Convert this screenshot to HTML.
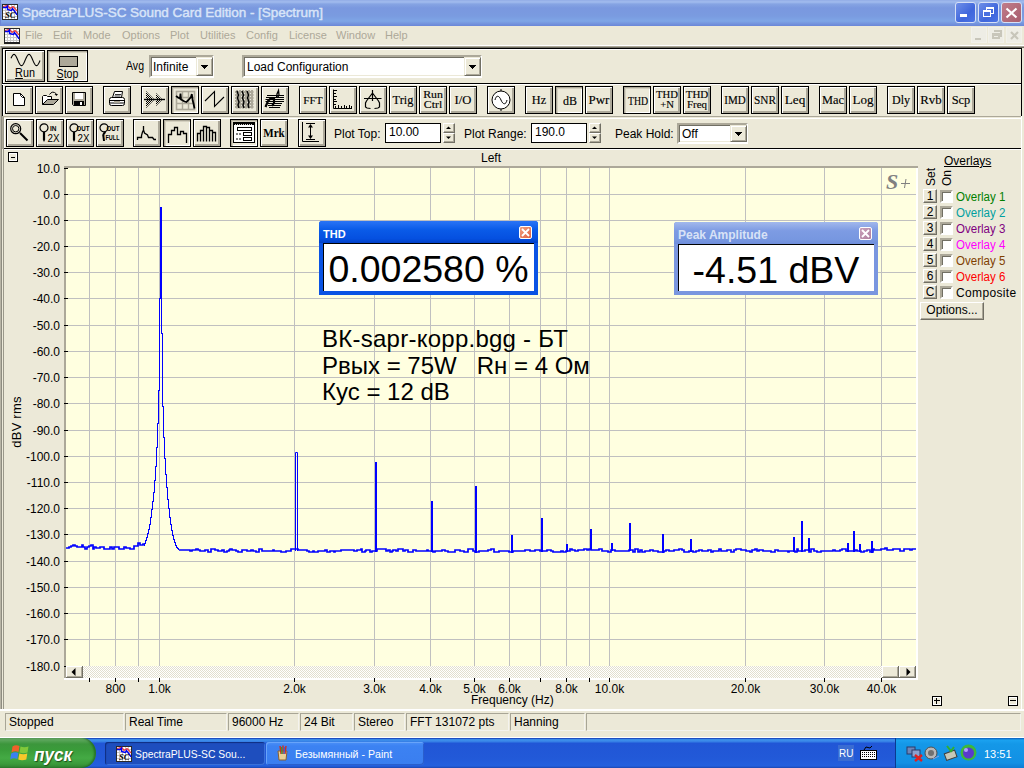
<!DOCTYPE html><html><head><meta charset="utf-8"><style>html,body{margin:0;padding:0;width:1024px;height:768px;overflow:hidden;background:#ECE9D8;}body{position:relative;font-family:"Liberation Sans",sans-serif;}body>div,body>svg{position:absolute;}.t{white-space:pre;line-height:14px;}</style></head><body><div style="left:0;top:0;width:1024px;height:26px;background:linear-gradient(to bottom,#92ACE6 0px,#A2BCEE 2px,#86A4E3 4px,#7A98DF 8px,#7A9BE0 16px,#7EA5E6 21px,#7392DC 24px,#6A86D8 26px);"></div>
<div style="left:0px;top:0px;width:1px;height:26px;background:#6C86D6"></div>
<svg style="position:absolute;left:2px;top:4px;" width="16" height="16" viewBox="0 0 16 16"><rect x="0.5" y="0.5" width="15" height="15" fill="#fff" stroke="#2A2A2A"/><line x1="3.5" y1="1" x2="3.5" y2="15" stroke="#C8C8C8"/><line x1="1" y1="3.5" x2="15" y2="3.5" stroke="#C8C8C8"/><line x1="6.5" y1="1" x2="6.5" y2="15" stroke="#C8C8C8"/><line x1="1" y1="6.5" x2="15" y2="6.5" stroke="#C8C8C8"/><line x1="9.5" y1="1" x2="9.5" y2="15" stroke="#C8C8C8"/><line x1="1" y1="9.5" x2="15" y2="9.5" stroke="#C8C8C8"/><line x1="12.5" y1="1" x2="12.5" y2="15" stroke="#C8C8C8"/><line x1="1" y1="12.5" x2="15" y2="12.5" stroke="#C8C8C8"/><polyline points="1,2.5 5.5,1.5 7,3 8,4.5 11,2.5 13,4.5 15,7" fill="none" stroke="#F03838" stroke-width="1.2"/><polyline points="1,3.5 4,3.5 5.5,2 5.5,5.5 7.5,6 9.5,6.5 10.5,4.5 12,6.5 13.5,8.5 15,11" fill="none" stroke="#0000F0" stroke-width="1.4"/><text x="3" y="14" font-family="Liberation Serif" font-style="italic" font-weight="bold" font-size="8" textLength="10.5" lengthAdjust="spacingAndGlyphs" fill="#000">SC</text></svg>
<div class="t" style="left:22px;top:6px;font-size:13.5px;color:#D8E4F8;-webkit-text-stroke:0.45px #D8E4F8;letter-spacing:-0.05px;">SpectraPLUS-SC Sound Card Edition - [Spectrum]</div>
<div style="left:955px;top:2px;width:19px;height:19px;border:1px solid #D6E0F6;border-radius:3px;background:linear-gradient(135deg,#6F8FE8,#3F66DC 60%,#4C74E4);"></div>
<div style="left:960px;top:14px;width:7px;height:3px;background:#fff"></div>
<div style="left:978px;top:2px;width:19px;height:19px;border:1px solid #D6E0F6;border-radius:3px;background:linear-gradient(135deg,#6F8FE8,#3F66DC 60%,#4C74E4);"></div>
<div style="left:986px;top:7px;width:8px;height:7px;border:1px solid #fff;border-top-width:2px;box-sizing:border-box;"></div>
<div style="left:983px;top:10px;width:8px;height:7px;border:1px solid #fff;border-top-width:2px;box-sizing:border-box;background:#4A70E0"></div>
<div style="left:1001px;top:2px;width:19px;height:19px;border:1px solid #D6E0F6;border-radius:3px;background:linear-gradient(135deg,#C07C8A,#A85E6E);"></div>
<svg style="position:absolute;left:1005px;top:7px;" width="13" height="12" viewBox="0 0 13 12"><path d="M1.5 1.5 L11.5 10.5 M11.5 1.5 L1.5 10.5" stroke="#fff" stroke-width="2.2"/></svg>
<div style="left:0px;top:26px;width:1024px;height:20px;background:#ECE9D8"></div>
<svg style="position:absolute;left:4px;top:28px;" width="16" height="16" viewBox="0 0 16 16"><rect x="0.5" y="0.5" width="15" height="15" fill="#fff" stroke="#2A2A2A"/><line x1="3.5" y1="1" x2="3.5" y2="15" stroke="#C8C8C8"/><line x1="1" y1="3.5" x2="15" y2="3.5" stroke="#C8C8C8"/><line x1="6.5" y1="1" x2="6.5" y2="15" stroke="#C8C8C8"/><line x1="1" y1="6.5" x2="15" y2="6.5" stroke="#C8C8C8"/><line x1="9.5" y1="1" x2="9.5" y2="15" stroke="#C8C8C8"/><line x1="1" y1="9.5" x2="15" y2="9.5" stroke="#C8C8C8"/><line x1="12.5" y1="1" x2="12.5" y2="15" stroke="#C8C8C8"/><line x1="1" y1="12.5" x2="15" y2="12.5" stroke="#C8C8C8"/><polyline points="1,2.5 5.5,1.5 7,3 8,4.5 11,2.5 13,4.5 15,7" fill="none" stroke="#F03838" stroke-width="1.2"/><polyline points="1,3.5 4,3.5 5.5,2 5.5,5.5 7.5,6 9.5,6.5 10.5,4.5 12,6.5 13.5,8.5 15,11" fill="none" stroke="#0000F0" stroke-width="1.4"/><rect x="0" y="14" width="16" height="2" fill="#222"/></svg>
<div class="t" style="left:25px;top:28px;font-size:11px;color:#ACA899;">File</div>
<div class="t" style="left:53px;top:28px;font-size:11px;color:#ACA899;">Edit</div>
<div class="t" style="left:83px;top:28px;font-size:11px;color:#ACA899;">Mode</div>
<div class="t" style="left:122px;top:28px;font-size:11px;color:#ACA899;">Options</div>
<div class="t" style="left:170px;top:28px;font-size:11px;color:#ACA899;">Plot</div>
<div class="t" style="left:200px;top:28px;font-size:11px;color:#ACA899;">Utilities</div>
<div class="t" style="left:246px;top:28px;font-size:11px;color:#ACA899;">Config</div>
<div class="t" style="left:289px;top:28px;font-size:11px;color:#ACA899;">License</div>
<div class="t" style="left:336px;top:28px;font-size:11px;color:#ACA899;">Window</div>
<div class="t" style="left:385px;top:28px;font-size:11px;color:#ACA899;">Help</div>
<div style="left:971px;top:27px;width:16px;height:16px;background:#EEEDE5;border:1px solid #F2F1EA;box-sizing:border-box"></div>
<div style="left:988px;top:27px;width:16px;height:16px;background:#EEEDE5;border:1px solid #F2F1EA;box-sizing:border-box"></div>
<div style="left:1006px;top:27px;width:16px;height:16px;background:#EEEDE5;border:1px solid #F2F1EA;box-sizing:border-box"></div>
<div style="left:975px;top:38px;width:6px;height:2px;background:#C8C6BA"></div>
<div style="left:994px;top:30px;width:8px;height:7px;border-top:2px solid #C8C6BA;border-right:2px solid #C8C6BA;box-sizing:border-box"></div>
<div style="left:992px;top:33px;width:8px;height:6px;border:2px solid #C8C6BA;border-top-width:3px;box-sizing:border-box;background:#EEEDE5"></div>
<svg style="position:absolute;left:1010px;top:31px;" width="9" height="9" viewBox="0 0 9 9"><path d="M1 1 L8 8 M8 1 L1 8" stroke="#C8C6BA" stroke-width="2.2"/></svg>
<div style="left:0px;top:45px;width:1024px;height:665px;background:#ECE9D8"></div>
<div style="left:0px;top:46px;width:2px;height:664px;background:#ACA899"></div>
<div style="left:0px;top:45px;width:1024px;height:1px;background:#fff"></div>
<div style="left:0px;top:46px;width:1024px;height:1px;background:#ACA899"></div>
<div style="left:0px;top:47px;width:1024px;height:1px;background:#716F64"></div>
<div style="left:2px;top:48px;width:1020px;height:1px;background:#000"></div>
<div style="left:2px;top:48px;width:1px;height:68px;background:#000"></div>
<div style="left:1021px;top:48px;width:1px;height:68px;background:#000"></div>
<div style="left:3px;top:49px;width:1018px;height:1px;background:#fff"></div>
<div style="left:3px;top:49px;width:1px;height:66px;background:#fff"></div>
<div style="left:2px;top:83px;width:1020px;height:1px;background:#000"></div>
<div style="left:2px;top:84px;width:1019px;height:1px;background:#fff"></div>
<div style="left:2px;top:116px;width:1020px;height:1px;background:#ACA899"></div>
<div style="left:2px;top:116px;width:1px;height:33px;background:#ACA899"></div>
<div style="left:3px;top:117px;width:1px;height:32px;background:#7B7A6E"></div>
<div style="left:4px;top:118px;width:1017px;height:1px;background:#fff"></div>
<div style="left:4px;top:118px;width:1px;height:31px;background:#fff"></div>
<div style="left:1021px;top:116px;width:1px;height:33px;background:#fff"></div>
<div style="left:4px;top:148px;width:1017px;height:1px;background:#000"></div>
<div style="left:4px;top:149px;width:1017px;height:1px;background:#fff"></div>
<div style="left:5px;top:50px;width:38px;height:30px;background:#ECE9D8;border:1px solid #000;box-shadow:inset 1px 1px 0 #fff,inset -2px -2px 0 #ACA899;"></div>
<svg style="position:absolute;left:5px;top:50px;" width="40" height="32" viewBox="0 0 40 32"><polyline points="6.0,8.27 6.5,7.20 7.0,6.25 7.5,5.47 8.0,4.88 8.5,4.52 9.0,4.40 9.5,4.52 10.0,4.88 10.5,5.47 11.0,6.25 11.5,7.20 12.0,8.27 12.5,9.41 13.0,10.59 13.5,11.73 14.0,12.80 14.5,13.75 15.0,14.53 15.5,15.12 16.0,15.48 16.5,15.60 17.0,15.48 17.5,15.12 18.0,14.53 18.5,13.75 19.0,12.80 19.5,11.73 20.0,10.59 20.5,9.41 21.0,8.27 21.5,7.20 22.0,6.25 22.5,5.47 23.0,4.88 23.5,4.52 24.0,4.40 24.5,4.52 25.0,4.88 25.5,5.47 26.0,6.25 26.5,7.20 27.0,8.27 27.5,9.41 28.0,10.59 28.5,11.73 29.0,12.80 29.5,13.75 30.0,14.53 30.5,15.12 31.0,15.48 31.5,15.60 32.0,15.48 32.5,15.12 33.0,14.53 33.5,13.75 34.0,12.80 34.5,11.73 35.0,10.59" fill="none" stroke="#000" stroke-width="1.1"/></svg>
<div class="t" style="left:5px;top:66px;width:40px;text-align:center;font-size:12px;color:#000;transform:scaleX(0.9);"><u>R</u>un</div>
<div style="left:47px;top:50px;width:39px;height:30px;background:#ECE9D8;border:1px solid #000;box-shadow:inset 1px 1px 0 #ACA899,inset 2px 2px 0 #D4D0C0,inset -1px -1px 0 #fff;"></div>
<div style="left:59px;top:56px;width:19px;height:11px;background:#ACA899;border:1px solid #000;box-sizing:border-box;"></div>
<div class="t" style="left:47px;top:67px;width:41px;text-align:center;font-size:12px;color:#000;transform:scaleX(0.88);"><u>S</u>top</div>
<div class="t" style="left:126px;top:59px;font-size:12px;color:#000;transform:scaleX(0.88);transform-origin:left;">Avg</div>
<div style="left:149px;top:55px;width:61px;height:19px;background:#fff;border:2px solid;border-color:#ACA899 #fff #fff #ACA899;box-shadow:inset 1px 1px 0 #716F64,inset -1px -1px 0 #ECE9D8;"></div>
<div class="t" style="left:153px;top:60px;font-size:12px;color:#000;">Infinite</div>
<div style="left:196px;top:57px;width:15px;height:17px;background:#ECE9D8;border:1px solid;border-color:#ECE9D8 #716F64 #716F64 #ECE9D8;box-shadow:inset 1px 1px 0 #fff,inset -1px -1px 0 #ACA899;"></div>
<svg style="position:absolute;left:201px;top:65px;shape-rendering:crispEdges;" width="7" height="4" viewBox="0 0 7 4"><path d="M0 0 H7 L3.5 4 Z" fill="#000"/></svg>
<div style="left:242px;top:55px;width:236px;height:19px;background:#fff;border:2px solid;border-color:#ACA899 #fff #fff #ACA899;box-shadow:inset 1px 1px 0 #716F64,inset -1px -1px 0 #ECE9D8;"></div>
<div class="t" style="left:247px;top:60px;font-size:12px;color:#000;">Load Configuration</div>
<div style="left:464px;top:57px;width:15px;height:17px;background:#ECE9D8;border:1px solid;border-color:#ECE9D8 #716F64 #716F64 #ECE9D8;box-shadow:inset 1px 1px 0 #fff,inset -1px -1px 0 #ACA899;"></div>
<svg style="position:absolute;left:469px;top:65px;shape-rendering:crispEdges;" width="7" height="4" viewBox="0 0 7 4"><path d="M0 0 H7 L3.5 4 Z" fill="#000"/></svg>
<div style="left:5px;top:86px;width:26px;height:26px;background:#ECE9D8;border:1px solid #000;box-shadow:inset 1px 1px 0 #fff,inset -2px -2px 0 #ACA899;"></div>
<svg style="position:absolute;left:5px;top:86px;" width="28" height="28" viewBox="0 0 28 28"><path d="M8.5 7.5 H15.5 L19.5 11.5 V19.5 H8.5 Z" fill="#fff" stroke="#000"/><path d="M15.5 7.5 V9.5 L17.5 11.5 H19.5" fill="none" stroke="#000"/></svg>
<div style="left:35px;top:86px;width:26px;height:26px;background:#ECE9D8;border:1px solid #000;box-shadow:inset 1px 1px 0 #fff,inset -2px -2px 0 #ACA899;"></div>
<svg style="position:absolute;left:35px;top:86px;" width="28" height="28" viewBox="0 0 28 28"><path d="M7.5 18.5 V10.5 L8.5 9.5 H11.5 L12.5 10.5 H16.5 V13.5" fill="#fff" stroke="#000"/><path d="M7.5 18.5 L12.5 13.5 H23.5 L18.5 18.5 Z" fill="#ACA899" stroke="#000"/><path d="M14.5 8.5 Q17.5 4 21.5 8" fill="none" stroke="#000"/><path d="M19.5 8 H23 L21.5 10 Z" fill="#000"/></svg>
<div style="left:65px;top:86px;width:26px;height:26px;background:#ECE9D8;border:1px solid #000;box-shadow:inset 1px 1px 0 #fff,inset -2px -2px 0 #ACA899;"></div>
<svg style="position:absolute;left:65px;top:86px;" width="28" height="28" viewBox="0 0 28 28"><path d="M7.5 6.5 H20.5 V19.5 H8.5 L7.5 18.5 Z" fill="#ACA899" stroke="#000"/><rect x="10" y="7" width="8" height="6" fill="#fff"/><rect x="9" y="15" width="10" height="4" fill="#000"/><rect x="15" y="16" width="2" height="3" fill="#fff"/></svg>
<div style="left:103px;top:86px;width:26px;height:26px;background:#ECE9D8;border:1px solid #000;box-shadow:inset 1px 1px 0 #fff,inset -2px -2px 0 #ACA899;"></div>
<svg style="position:absolute;left:103px;top:86px;" width="28" height="28" viewBox="0 0 28 28"><path d="M9.5 11.5 L11.5 5.5 H19.5 L18.5 11.5" fill="#fff" stroke="#000"/><path d="M12 8.5 H18 M11.5 10 H17.5" stroke="#000" stroke-width="0.8"/><rect x="6.5" y="11.5" width="15" height="8" rx="2" fill="#fff" stroke="#000"/><path d="M7 14.5 H21 M7 17 H21" stroke="#000"/><rect x="11" y="15" width="6" height="2" fill="#ACA899"/></svg>
<div style="left:141px;top:86px;width:26px;height:26px;background:#ECE9D8;border:1px solid #000;box-shadow:inset 1px 1px 0 #fff,inset -2px -2px 0 #ACA899;"></div>
<svg style="position:absolute;left:141px;top:86px;" width="28" height="28" viewBox="0 0 28 28"><defs><pattern id="dth1" width="2" height="2" patternUnits="userSpaceOnUse"><rect width="1" height="1" fill="#000"/><rect x="1" y="1" width="1" height="1" fill="#000"/></pattern></defs><path d="M5 5 L13.5 13.5 L5 22 Z M15 7 L21.5 13.5 L15 20 Z" fill="url(#dth1)"/><path d="M3 13.5 H24" stroke="#000" stroke-width="1.4"/></svg>
<div style="left:171px;top:86px;width:26px;height:26px;background:#ECE9D8;border:1px solid #000;box-shadow:inset 1px 1px 0 #ACA899,inset 2px 2px 0 #D4D0C0,inset -1px -1px 0 #fff;"></div>
<svg style="position:absolute;left:171px;top:86px;" width="28" height="28" viewBox="0 0 28 28"><rect x="5.5" y="5.5" width="18" height="18" fill="none" stroke="#ACA899" stroke-width="1.6"/><path d="M11.5 5 V24 M17.5 5 V24 M5 11.5 H24 M5 17.5 H24" stroke="#ACA899" stroke-width="1.4"/><path d="M5 10 L7 11.5 L9 12.5 L9.5 7.5 L10 13.5 L13.5 15.5 L15.5 16 L17.5 14 L20 11 L20.8 8 L21.7 14.5 L22.6 18 L23.5 22.5" fill="none" stroke="#000" stroke-width="1.8"/></svg>
<div style="left:201px;top:86px;width:26px;height:26px;background:#ECE9D8;border:1px solid #000;box-shadow:inset 1px 1px 0 #fff,inset -2px -2px 0 #ACA899;"></div>
<svg style="position:absolute;left:201px;top:86px;" width="28" height="28" viewBox="0 0 28 28"><path d="M4 15 L13.5 5.5 V20.5 L23 11" fill="none" stroke="#000" stroke-width="1.1"/></svg>
<div style="left:231px;top:86px;width:26px;height:26px;background:#ECE9D8;border:1px solid #000;box-shadow:inset 1px 1px 0 #fff,inset -2px -2px 0 #ACA899;"></div>
<svg style="position:absolute;left:231px;top:86px;" width="28" height="28" viewBox="0 0 28 28"><defs><pattern id="dth2" width="3" height="3" patternUnits="userSpaceOnUse"><rect width="3" height="3" fill="#ACA899"/><rect x="1" y="1" width="1" height="1" fill="#E8E6DC"/></pattern></defs><rect x="4" y="4" width="18.5" height="18.5" fill="url(#dth2)"/><path d="M6 5 L7.5 9 L6.5 12 L8 16 L7 19 L8 22" fill="none" stroke="#000" stroke-width="1.4"/><path d="M11 5 L12.5 9 L11.5 12 L13 16 L12 19 L13 22" fill="none" stroke="#000" stroke-width="1.4"/><path d="M16 5 L17.5 9 L16.5 12 L18 16 L17 19 L18 22" fill="none" stroke="#000" stroke-width="1.4"/></svg>
<div style="left:261px;top:86px;width:26px;height:26px;background:#ECE9D8;border:1px solid #000;box-shadow:inset 1px 1px 0 #fff,inset -2px -2px 0 #ACA899;"></div>
<svg style="position:absolute;left:261px;top:86px;" width="28" height="28" viewBox="0 0 28 28"><path d="M6 9.5 H23 M5 11.5 H23 M4.5 13.5 H23 M4.5 15.5 H23 M7 17.5 H21 M7 19.5 H20 M8 21.5 H19" stroke="#000" stroke-width="1"/><path d="M4.5 21 L7 15 L9 13 L13 12.5 L13 17 L11 20" fill="none" stroke="#000" stroke-width="2.2"/><path d="M15.5 12 L16 8 L17.5 4.5 L18 9 L16.5 12" fill="none" stroke="#000" stroke-width="1.3"/></svg>
<div style="left:299px;top:86px;width:26px;height:26px;background:#ECE9D8;border:1px solid #000;box-shadow:inset 1px 1px 0 #fff,inset -2px -2px 0 #ACA899;"></div>
<div class="t" style="left:299px;top:93px;width:28px;text-align:center;font-family:'Liberation Serif',serif;-webkit-text-stroke:0.15px #000;font-size:11px;color:#000;transform:scaleX(1.018);">FFT</div>
<div style="left:329px;top:86px;width:26px;height:26px;background:#ECE9D8;border:1px solid #000;box-shadow:inset 1px 1px 0 #fff,inset -2px -2px 0 #ACA899;"></div>
<svg style="position:absolute;left:329px;top:86px;" width="28" height="28" viewBox="0 0 28 28"><path d="M4.5 3.5 V22.5 H23 M5 4.5 H8M5 7.5 H7M5 10.5 H8M5 13.5 H7M5 15.5 H8M5 18.5 H7 M6.5 22 V20M9.5 22 V19M12.5 22 V20M15.5 22 V19M17.5 22 V20M20.5 22 V19M22.5 22 V20" fill="none" stroke="#000" stroke-width="1"/></svg>
<div style="left:359px;top:86px;width:26px;height:26px;background:#ECE9D8;border:1px solid #000;box-shadow:inset 1px 1px 0 #fff,inset -2px -2px 0 #ACA899;"></div>
<svg style="position:absolute;left:359px;top:86px;" width="28" height="28" viewBox="0 0 28 28"><path d="M13.5 4 V15 M5 12.5 H22.5 M13.5 7 L7.5 15 L6.5 17 V21 L8 22 L11.5 22.5 M13.5 7 L19.5 15 L20.5 17 V21 L19 22 L15.5 22.5" fill="none" stroke="#000" stroke-width="1.2"/></svg>
<div style="left:389px;top:86px;width:26px;height:26px;background:#ECE9D8;border:1px solid #000;box-shadow:inset 1px 1px 0 #fff,inset -2px -2px 0 #ACA899;"></div>
<div class="t" style="left:389px;top:93px;width:28px;text-align:center;font-family:'Liberation Serif',serif;-webkit-text-stroke:0.15px #000;font-size:13px;color:#000;transform:scaleX(0.948);">Trig</div>
<div style="left:419px;top:86px;width:26px;height:26px;background:#ECE9D8;border:1px solid #000;box-shadow:inset 1px 1px 0 #fff,inset -2px -2px 0 #ACA899;"></div>
<div class="t" style="left:419px;top:89px;width:28px;text-align:center;font-family:'Liberation Serif',serif;-webkit-text-stroke:0.15px #000;font-size:11px;line-height:10px;color:#000;transform:scaleX(1.075);">Run<br>Ctrl</div>
<div style="left:449px;top:86px;width:26px;height:26px;background:#ECE9D8;border:1px solid #000;box-shadow:inset 1px 1px 0 #fff,inset -2px -2px 0 #ACA899;"></div>
<div class="t" style="left:449px;top:93px;width:28px;text-align:center;font-family:'Liberation Serif',serif;-webkit-text-stroke:0.15px #000;font-size:13px;color:#000;transform:scaleX(0.969);">I/O</div>
<div style="left:487px;top:86px;width:26px;height:26px;background:#ECE9D8;border:1px solid #000;box-shadow:inset 1px 1px 0 #fff,inset -2px -2px 0 #ACA899;"></div>
<svg style="position:absolute;left:487px;top:86px;" width="28" height="28" viewBox="0 0 28 28"><circle cx="14" cy="14" r="9" fill="#fff" stroke="#000"/><path d="M8 14 C9 9,12 9,14 14 S19 19,20 14" fill="none" stroke="#000"/><path d="M14 3 V5 M14 23 V25" stroke="#000"/></svg>
<div style="left:525px;top:86px;width:26px;height:26px;background:#ECE9D8;border:1px solid #000;box-shadow:inset 1px 1px 0 #fff,inset -2px -2px 0 #ACA899;"></div>
<div class="t" style="left:525px;top:93px;width:28px;text-align:center;font-family:'Liberation Serif',serif;-webkit-text-stroke:0.15px #000;font-size:13px;color:#000;transform:scaleX(0.943);">Hz</div>
<div style="left:555px;top:86px;width:26px;height:26px;background:#ECE9D8;border:1px solid #000;box-shadow:inset 1px 1px 0 #ACA899,inset 2px 2px 0 #D4D0C0,inset -1px -1px 0 #fff;"></div>
<div class="t" style="left:556px;top:94px;width:28px;text-align:center;font-family:'Liberation Serif',serif;-webkit-text-stroke:0.15px #000;font-size:13px;color:#000;transform:scaleX(0.922);">dB</div>
<div style="left:585px;top:86px;width:26px;height:26px;background:#ECE9D8;border:1px solid #000;box-shadow:inset 1px 1px 0 #fff,inset -2px -2px 0 #ACA899;"></div>
<div class="t" style="left:585px;top:93px;width:28px;text-align:center;font-family:'Liberation Serif',serif;-webkit-text-stroke:0.15px #000;font-size:13px;color:#000;transform:scaleX(0.998);">Pwr</div>
<div style="left:623px;top:86px;width:26px;height:26px;background:#ECE9D8;border:1px solid #000;box-shadow:inset 1px 1px 0 #ACA899,inset 2px 2px 0 #D4D0C0,inset -1px -1px 0 #fff;"></div>
<div class="t" style="left:624px;top:94px;width:28px;text-align:center;font-family:'Liberation Serif',serif;-webkit-text-stroke:0.15px #000;font-size:12px;color:#000;transform:scaleX(0.819);">THD</div>
<div style="left:653px;top:86px;width:26px;height:26px;background:#ECE9D8;border:1px solid #000;box-shadow:inset 1px 1px 0 #fff,inset -2px -2px 0 #ACA899;"></div>
<div class="t" style="left:653px;top:89px;width:28px;text-align:center;font-family:'Liberation Serif',serif;-webkit-text-stroke:0.15px #000;font-size:11px;line-height:10px;color:#000;transform:scaleX(0.968);">THD<br>+N</div>
<div style="left:683px;top:86px;width:26px;height:26px;background:#ECE9D8;border:1px solid #000;box-shadow:inset 1px 1px 0 #fff,inset -2px -2px 0 #ACA899;"></div>
<div class="t" style="left:683px;top:89px;width:28px;text-align:center;font-family:'Liberation Serif',serif;-webkit-text-stroke:0.15px #000;font-size:11px;line-height:10px;color:#000;transform:scaleX(0.997);">THD<br>Freq</div>
<div style="left:721px;top:86px;width:26px;height:26px;background:#ECE9D8;border:1px solid #000;box-shadow:inset 1px 1px 0 #fff,inset -2px -2px 0 #ACA899;"></div>
<div class="t" style="left:721px;top:93px;width:28px;text-align:center;font-family:'Liberation Serif',serif;-webkit-text-stroke:0.15px #000;font-size:12px;color:#000;transform:scaleX(0.917);">IMD</div>
<div style="left:751px;top:86px;width:26px;height:26px;background:#ECE9D8;border:1px solid #000;box-shadow:inset 1px 1px 0 #fff,inset -2px -2px 0 #ACA899;"></div>
<div class="t" style="left:751px;top:93px;width:28px;text-align:center;font-family:'Liberation Serif',serif;-webkit-text-stroke:0.15px #000;font-size:12px;color:#000;transform:scaleX(0.938);">SNR</div>
<div style="left:781px;top:86px;width:26px;height:26px;background:#ECE9D8;border:1px solid #000;box-shadow:inset 1px 1px 0 #fff,inset -2px -2px 0 #ACA899;"></div>
<div class="t" style="left:781px;top:93px;width:28px;text-align:center;font-family:'Liberation Serif',serif;-webkit-text-stroke:0.15px #000;font-size:13px;color:#000;transform:scaleX(1.019);">Leq</div>
<div style="left:819px;top:86px;width:26px;height:26px;background:#ECE9D8;border:1px solid #000;box-shadow:inset 1px 1px 0 #fff,inset -2px -2px 0 #ACA899;"></div>
<div class="t" style="left:819px;top:93px;width:28px;text-align:center;font-family:'Liberation Serif',serif;-webkit-text-stroke:0.15px #000;font-size:13px;color:#000;transform:scaleX(0.948);">Mac</div>
<div style="left:849px;top:86px;width:26px;height:26px;background:#ECE9D8;border:1px solid #000;box-shadow:inset 1px 1px 0 #fff,inset -2px -2px 0 #ACA899;"></div>
<div class="t" style="left:849px;top:93px;width:28px;text-align:center;font-family:'Liberation Serif',serif;-webkit-text-stroke:0.15px #000;font-size:13px;color:#000;transform:scaleX(1.007);">Log</div>
<div style="left:887px;top:86px;width:26px;height:26px;background:#ECE9D8;border:1px solid #000;box-shadow:inset 1px 1px 0 #fff,inset -2px -2px 0 #ACA899;"></div>
<div class="t" style="left:887px;top:93px;width:28px;text-align:center;font-family:'Liberation Serif',serif;-webkit-text-stroke:0.15px #000;font-size:13px;color:#000;transform:scaleX(0.923);">Dly</div>
<div style="left:917px;top:86px;width:26px;height:26px;background:#ECE9D8;border:1px solid #000;box-shadow:inset 1px 1px 0 #fff,inset -2px -2px 0 #ACA899;"></div>
<div class="t" style="left:917px;top:93px;width:28px;text-align:center;font-family:'Liberation Serif',serif;-webkit-text-stroke:0.15px #000;font-size:13px;color:#000;transform:scaleX(0.987);">Rvb</div>
<div style="left:947px;top:86px;width:26px;height:26px;background:#ECE9D8;border:1px solid #000;box-shadow:inset 1px 1px 0 #fff,inset -2px -2px 0 #ACA899;"></div>
<div class="t" style="left:947px;top:93px;width:28px;text-align:center;font-family:'Liberation Serif',serif;-webkit-text-stroke:0.15px #000;font-size:13px;color:#000;transform:scaleX(0.954);">Scp</div>
<div style="left:6px;top:119px;width:26px;height:26px;background:#ECE9D8;border:1px solid #000;box-shadow:inset 1px 1px 0 #fff,inset -2px -2px 0 #ACA899;"></div>
<svg style="position:absolute;left:6px;top:119px;" width="28" height="28" viewBox="0 0 28 28"><circle cx="9.7" cy="9.7" r="5" fill="none" stroke="#000" stroke-width="1.2"/><circle cx="9.7" cy="9.7" r="3.2" fill="none" stroke="#000" stroke-width="1"/><path d="M14 14 L21.5 21.5" stroke="#000" stroke-width="2"/></svg>
<div style="left:36px;top:119px;width:26px;height:26px;background:#ECE9D8;border:1px solid #000;box-shadow:inset 1px 1px 0 #fff,inset -2px -2px 0 #ACA899;"></div>
<svg style="position:absolute;left:36px;top:119px;" width="28" height="28" viewBox="0 0 28 28"><circle cx="8" cy="8.8" r="4" fill="none" stroke="#000" stroke-width="1.2"/><path d="M8 13 V21" stroke="#000" stroke-width="2.2"/><path d="M7 21 L8 23 L9 21Z" fill="#000"/><text x="14" y="11.5" font-family="Liberation Sans" font-weight="bold" font-size="6.5" fill="#000">IN</text><text x="11.5" y="22.5" font-family="Liberation Sans" font-size="10" textLength="12" lengthAdjust="spacingAndGlyphs" fill="#000">2X</text></svg>
<div style="left:66px;top:119px;width:26px;height:26px;background:#ECE9D8;border:1px solid #000;box-shadow:inset 1px 1px 0 #fff,inset -2px -2px 0 #ACA899;"></div>
<svg style="position:absolute;left:66px;top:119px;" width="28" height="28" viewBox="0 0 28 28"><circle cx="8" cy="8.8" r="4" fill="none" stroke="#000" stroke-width="1.2"/><path d="M8 13 V21" stroke="#000" stroke-width="2.2"/><path d="M7 21 L8 23 L9 21Z" fill="#000"/><text x="10.5" y="11.5" font-family="Liberation Sans" font-weight="bold" font-size="6.5" textLength="13" lengthAdjust="spacingAndGlyphs" fill="#000">OUT</text><text x="11.5" y="22.5" font-family="Liberation Sans" font-size="10" textLength="12" lengthAdjust="spacingAndGlyphs" fill="#000">2X</text></svg>
<div style="left:96px;top:119px;width:26px;height:26px;background:#ECE9D8;border:1px solid #000;box-shadow:inset 1px 1px 0 #fff,inset -2px -2px 0 #ACA899;"></div>
<svg style="position:absolute;left:96px;top:119px;" width="28" height="28" viewBox="0 0 28 28"><circle cx="8" cy="8.8" r="4" fill="none" stroke="#000" stroke-width="1.2"/><path d="M9.5 13 Q6.5 15 7.5 18 L8 22" fill="none" stroke="#000" stroke-width="2"/><text x="10.5" y="11.5" font-family="Liberation Sans" font-weight="bold" font-size="6.5" textLength="13" lengthAdjust="spacingAndGlyphs" fill="#000">OUT</text><text x="9.5" y="20.5" font-family="Liberation Sans" font-weight="bold" font-size="6.5" textLength="14" lengthAdjust="spacingAndGlyphs" fill="#000">FULL</text></svg>
<div style="left:133px;top:119px;width:26px;height:26px;background:#ECE9D8;border:1px solid #000;box-shadow:inset 1px 1px 0 #fff,inset -2px -2px 0 #ACA899;"></div>
<svg style="position:absolute;left:133px;top:119px;" width="28" height="28" viewBox="0 0 28 28"><path d="M4.5 21 V18.5 H8.5 V16.5 L9.5 13 L10.5 11 V7 M10.5 11 L11.5 14 L14.5 16 L15.5 18.5 H19.5 L21 20.5 H23" fill="none" stroke="#000" stroke-width="1.3"/></svg>
<div style="left:163px;top:119px;width:26px;height:26px;background:#ECE9D8;border:1px solid #000;box-shadow:inset 1px 1px 0 #ACA899,inset 2px 2px 0 #D4D0C0,inset -1px -1px 0 #fff;"></div>
<svg style="position:absolute;left:163px;top:119px;" width="28" height="28" viewBox="0 0 28 28"><path d="M5.5 24 V15.5 H8.5 V11.5 H11.5 V8.5 H14.5 V15.5 H17.5 V12.5 H20.5 V14.5 H23.5 V24" fill="none" stroke="#000" stroke-width="1.3"/></svg>
<div style="left:193px;top:119px;width:26px;height:26px;background:#ECE9D8;border:1px solid #000;box-shadow:inset 1px 1px 0 #fff,inset -2px -2px 0 #ACA899;"></div>
<svg style="position:absolute;left:193px;top:119px;" width="28" height="28" viewBox="0 0 28 28"><path d="M4.5 22.5 V14.5 H7.5 V11.5 H10.5 V7.5 H13.5 V8.5 H16.5 V11.5 H19.5 V13.5 H22.5 V22.5 M7.5 11.5 V22.5 M10.5 7.5 V22.5 M13.5 8.5 V22.5 M16.5 11.5 V22.5 M19.5 13.5 V22.5" fill="none" stroke="#000" stroke-width="1.3"/></svg>
<div style="left:230px;top:119px;width:26px;height:26px;background:#ECE9D8;border:1px solid #000;box-shadow:inset 1px 1px 0 #ACA899,inset 2px 2px 0 #D4D0C0,inset -1px -1px 0 #fff;"></div>
<svg style="position:absolute;left:230px;top:119px;" width="28" height="28" viewBox="0 0 28 28"><rect x="3.5" y="3.5" width="21" height="20" fill="#fff" stroke="#000"/><rect x="4" y="4" width="20" height="2" fill="#000"/><path d="M5 5.5 H23" stroke="#fff" stroke-width="0.8" stroke-dasharray="1 1"/><rect x="7.5" y="8.5" width="14" height="3" fill="#fff" stroke="#000"/><rect x="13.5" y="13.5" width="8" height="3" fill="#fff" stroke="#000"/><rect x="13.5" y="18.5" width="8" height="3" fill="#fff" stroke="#000"/><path d="M6 15 H11 M6 20 H11" stroke="#000" stroke-dasharray="2 1"/></svg>
<div style="left:260px;top:119px;width:26px;height:26px;background:#ECE9D8;border:1px solid #000;box-shadow:inset 1px 1px 0 #fff,inset -2px -2px 0 #ACA899;"></div>
<div class="t" style="left:260px;top:126px;width:28px;text-align:center;font-family:'Liberation Serif',serif;font-weight:bold;font-size:13px;color:#000;transform:scaleX(0.85);">Mrk</div>
<div style="left:298px;top:119px;width:26px;height:26px;background:#ECE9D8;border:1px solid #000;box-shadow:inset 1px 1px 0 #fff,inset -2px -2px 0 #ACA899;"></div>
<svg style="position:absolute;left:298px;top:119px;" width="28" height="28" viewBox="0 0 28 28"><path d="M4.5 3 V22.5 H21" fill="none" stroke="#000"/><path d="M8 4.5 H17 M8 20.5 H17 M12.5 6 V19" fill="none" stroke="#000"/><path d="M10 8.5 L12.5 5 L15 8.5 Z M10 16.5 L12.5 20 L15 16.5 Z" fill="#000"/></svg>
<div class="t" style="left:334px;top:127px;font-size:12px;color:#000;">Plot Top:</div>
<div style="left:385px;top:123px;width:54px;height:18px;background:#fff;border:1px solid #000;"></div>
<div class="t" style="left:389px;top:125px;font-size:12px;color:#000;">10.00</div>
<div style="left:443px;top:123px;width:10px;height:8px;background:#ECE9D8;border:1px solid;border-color:#fff #716F64 #716F64 #fff;box-shadow:inset -1px -1px 0 #ACA899;"></div>
<div style="left:443px;top:133px;width:10px;height:8px;background:#ECE9D8;border:1px solid;border-color:#fff #716F64 #716F64 #fff;box-shadow:inset -1px -1px 0 #ACA899;"></div>
<svg style="position:absolute;left:446px;top:126px;" width="6" height="4" viewBox="0 0 6 4"><path d="M0 3 H5 L2.5 0.5 Z" fill="#000"/></svg>
<svg style="position:absolute;left:446px;top:136px;" width="6" height="4" viewBox="0 0 6 4"><path d="M0 0.5 H5 L2.5 3 Z" fill="#000"/></svg>
<div class="t" style="left:464px;top:127px;font-size:12px;color:#000;">Plot Range:</div>
<div style="left:531px;top:123px;width:54px;height:18px;background:#fff;border:1px solid #000;"></div>
<div class="t" style="left:535px;top:125px;font-size:12px;color:#000;">190.0</div>
<div style="left:589px;top:123px;width:10px;height:8px;background:#ECE9D8;border:1px solid;border-color:#fff #716F64 #716F64 #fff;box-shadow:inset -1px -1px 0 #ACA899;"></div>
<div style="left:589px;top:133px;width:10px;height:8px;background:#ECE9D8;border:1px solid;border-color:#fff #716F64 #716F64 #fff;box-shadow:inset -1px -1px 0 #ACA899;"></div>
<svg style="position:absolute;left:592px;top:126px;" width="6" height="4" viewBox="0 0 6 4"><path d="M0 3 H5 L2.5 0.5 Z" fill="#000"/></svg>
<svg style="position:absolute;left:592px;top:136px;" width="6" height="4" viewBox="0 0 6 4"><path d="M0 0.5 H5 L2.5 3 Z" fill="#000"/></svg>
<div class="t" style="left:615px;top:127px;font-size:12px;color:#000;">Peak Hold:</div>
<div style="left:677px;top:123px;width:67px;height:17px;background:#fff;border:2px solid;border-color:#ACA899 #fff #fff #ACA899;box-shadow:inset 1px 1px 0 #716F64,inset -1px -1px 0 #ECE9D8;"></div>
<div class="t" style="left:682px;top:127px;font-size:12px;color:#000;">Off</div>
<div style="left:730px;top:125px;width:15px;height:15px;background:#ECE9D8;border:1px solid;border-color:#ECE9D8 #716F64 #716F64 #ECE9D8;box-shadow:inset 1px 1px 0 #fff,inset -1px -1px 0 #ACA899;"></div>
<svg style="position:absolute;left:735px;top:132px;shape-rendering:crispEdges;" width="7" height="4" viewBox="0 0 7 4"><path d="M0 0 H7 L3.5 4 Z" fill="#000"/></svg>
<div style="left:4px;top:150px;width:1017px;height:559px;background:#ECE9D8"></div>
<div style="left:0px;top:46px;width:1px;height:664px;background:#B8B5A6"></div>
<div style="left:1px;top:46px;width:1px;height:664px;background:#8E8C80"></div>
<div style="left:3px;top:117px;width:1px;height:592px;background:#9A988A"></div>
<div style="left:8px;top:152px;width:10px;height:10px;background:#fff;border:1px solid #000;box-sizing:border-box"></div>
<div style="left:10px;top:154px;width:6px;height:6px;background:#ECE9D8"></div>
<div style="left:11px;top:157px;width:4px;height:1px;background:#000"></div>
<div class="t" style="left:0px;top:151px;width:982px;text-align:center;font-size:12px;color:#000;">Left</div>
<div class="t" style="left:0px;top:162px;width:60px;text-align:right;font-size:12px;color:#000;">10.0</div>
<div class="t" style="left:0px;top:188px;width:60px;text-align:right;font-size:12px;color:#000;">0.0</div>
<div class="t" style="left:0px;top:214px;width:60px;text-align:right;font-size:12px;color:#000;">-10.0</div>
<div class="t" style="left:0px;top:240px;width:60px;text-align:right;font-size:12px;color:#000;">-20.0</div>
<div class="t" style="left:0px;top:266px;width:60px;text-align:right;font-size:12px;color:#000;">-30.0</div>
<div class="t" style="left:0px;top:292px;width:60px;text-align:right;font-size:12px;color:#000;">-40.0</div>
<div class="t" style="left:0px;top:319px;width:60px;text-align:right;font-size:12px;color:#000;">-50.0</div>
<div class="t" style="left:0px;top:345px;width:60px;text-align:right;font-size:12px;color:#000;">-60.0</div>
<div class="t" style="left:0px;top:371px;width:60px;text-align:right;font-size:12px;color:#000;">-70.0</div>
<div class="t" style="left:0px;top:397px;width:60px;text-align:right;font-size:12px;color:#000;">-80.0</div>
<div class="t" style="left:0px;top:424px;width:60px;text-align:right;font-size:12px;color:#000;">-90.0</div>
<div class="t" style="left:0px;top:450px;width:60px;text-align:right;font-size:12px;color:#000;">-100.0</div>
<div class="t" style="left:0px;top:476px;width:60px;text-align:right;font-size:12px;color:#000;">-110.0</div>
<div class="t" style="left:0px;top:502px;width:60px;text-align:right;font-size:12px;color:#000;">-120.0</div>
<div class="t" style="left:0px;top:528px;width:60px;text-align:right;font-size:12px;color:#000;">-130.0</div>
<div class="t" style="left:0px;top:555px;width:60px;text-align:right;font-size:12px;color:#000;">-140.0</div>
<div class="t" style="left:0px;top:581px;width:60px;text-align:right;font-size:12px;color:#000;">-150.0</div>
<div class="t" style="left:0px;top:607px;width:60px;text-align:right;font-size:12px;color:#000;">-160.0</div>
<div class="t" style="left:0px;top:633px;width:60px;text-align:right;font-size:12px;color:#000;">-170.0</div>
<div class="t" style="left:0px;top:660px;width:60px;text-align:right;font-size:12px;color:#000;">-180.0</div>
<div class="t" style="left:75px;top:682px;width:81px;text-align:center;font-size:12px;color:#000;">800</div>
<div class="t" style="left:119px;top:682px;width:81px;text-align:center;font-size:12px;color:#000;">1.0k</div>
<div class="t" style="left:254px;top:682px;width:81px;text-align:center;font-size:12px;color:#000;">2.0k</div>
<div class="t" style="left:334px;top:682px;width:81px;text-align:center;font-size:12px;color:#000;">3.0k</div>
<div class="t" style="left:390px;top:682px;width:81px;text-align:center;font-size:12px;color:#000;">4.0k</div>
<div class="t" style="left:434px;top:682px;width:81px;text-align:center;font-size:12px;color:#000;">5.0k</div>
<div class="t" style="left:469px;top:682px;width:81px;text-align:center;font-size:12px;color:#000;">6.0k</div>
<div class="t" style="left:526px;top:682px;width:81px;text-align:center;font-size:12px;color:#000;">8.0k</div>
<div class="t" style="left:569px;top:682px;width:81px;text-align:center;font-size:12px;color:#000;">10.0k</div>
<div class="t" style="left:705px;top:682px;width:81px;text-align:center;font-size:12px;color:#000;">20.0k</div>
<div class="t" style="left:784px;top:682px;width:81px;text-align:center;font-size:12px;color:#000;">30.0k</div>
<div class="t" style="left:841px;top:682px;width:81px;text-align:center;font-size:12px;color:#000;">40.0k</div>
<div class="t" style="left:471px;top:693px;font-size:12px;color:#000;">Frequency (Hz)</div>
<div class="t" style="left:-13px;top:415px;width:60px;text-align:center;font-size:13px;letter-spacing:0.2px;color:#000;transform:rotate(-90deg);">dBV rms</div>
<svg style="position:absolute;left:0px;top:0px;pointer-events:none;" width="1024" height="768" viewBox="0 0 1024 768"><rect x="66" y="168" width="850" height="510" fill="#FFFFE0"/><rect x="64" y="166" width="854" height="2" fill="#ACA899"/><rect x="64" y="166" width="2" height="514" fill="#ACA899"/><rect x="916" y="168" width="2" height="512" fill="#fff"/><rect x="64" y="678" width="854" height="2" fill="#fff"/><path d="M89.5 168V666M115.5 168V666M138.5 168V666M159.5 168V666M294.5 168V666M374.5 168V666M430.5 168V666M474.5 168V666M509.5 168V666M540.5 168V666M566.5 168V666M589.5 168V666M609.5 168V666M745.5 168V666M824.5 168V666M881.5 168V666M66 194.5H916M66 220.5H916M66 246.5H916M66 272.5H916M66 298.5H916M66 325.5H916M66 351.5H916M66 377.5H916M66 403.5H916M66 430.5H916M66 456.5H916M66 482.5H916M66 508.5H916M66 534.5H916M66 561.5H916M66 587.5H916M66 613.5H916M66 639.5H916M66 666.5H916" stroke="#C0C0C0" stroke-width="1" fill="none"/><rect x="64" y="168" width="4" height="1" fill="#000"/><rect x="64" y="194" width="4" height="1" fill="#000"/><rect x="64" y="220" width="4" height="1" fill="#000"/><rect x="64" y="246" width="4" height="1" fill="#000"/><rect x="64" y="272" width="4" height="1" fill="#000"/><rect x="64" y="298" width="4" height="1" fill="#000"/><rect x="64" y="325" width="4" height="1" fill="#000"/><rect x="64" y="351" width="4" height="1" fill="#000"/><rect x="64" y="377" width="4" height="1" fill="#000"/><rect x="64" y="403" width="4" height="1" fill="#000"/><rect x="64" y="430" width="4" height="1" fill="#000"/><rect x="64" y="456" width="4" height="1" fill="#000"/><rect x="64" y="482" width="4" height="1" fill="#000"/><rect x="64" y="508" width="4" height="1" fill="#000"/><rect x="64" y="534" width="4" height="1" fill="#000"/><rect x="64" y="561" width="4" height="1" fill="#000"/><rect x="64" y="587" width="4" height="1" fill="#000"/><rect x="64" y="613" width="4" height="1" fill="#000"/><rect x="64" y="639" width="4" height="1" fill="#000"/><rect x="64" y="666" width="4" height="1" fill="#000"/><rect x="89" y="678" width="1" height="4" fill="#000"/><rect x="115" y="678" width="1" height="4" fill="#000"/><rect x="138" y="678" width="1" height="4" fill="#000"/><rect x="159" y="678" width="1" height="4" fill="#000"/><rect x="294" y="678" width="1" height="4" fill="#000"/><rect x="374" y="678" width="1" height="4" fill="#000"/><rect x="430" y="678" width="1" height="4" fill="#000"/><rect x="474" y="678" width="1" height="4" fill="#000"/><rect x="509" y="678" width="1" height="4" fill="#000"/><rect x="540" y="678" width="1" height="4" fill="#000"/><rect x="566" y="678" width="1" height="4" fill="#000"/><rect x="589" y="678" width="1" height="4" fill="#000"/><rect x="609" y="678" width="1" height="4" fill="#000"/><rect x="745" y="678" width="1" height="4" fill="#000"/><rect x="824" y="678" width="1" height="4" fill="#000"/><rect x="881" y="678" width="1" height="4" fill="#000"/><defs><pattern id="dith" width="2" height="2" patternUnits="userSpaceOnUse"><rect width="2" height="2" fill="#FFFFFF"/><rect width="1" height="1" fill="#E2DFCE"/><rect x="1" y="1" width="1" height="1" fill="#E2DFCE"/></pattern></defs><rect x="66" y="666" width="850" height="12" fill="url(#dith)"/><rect x="66" y="666" width="17" height="12" fill="#716F64"/><rect x="66" y="666" width="16" height="11" fill="#fff"/><rect x="67" y="667" width="15" height="10" fill="#ACA899"/><rect x="67" y="667" width="14" height="9" fill="#ECE9D8"/><path d="M71.5 672 L75.5 668 V676 Z" fill="#000"/><rect x="882" y="666" width="17" height="12" fill="#716F64"/><rect x="882" y="666" width="16" height="11" fill="#fff"/><rect x="883" y="667" width="15" height="10" fill="#ACA899"/><rect x="883" y="667" width="14" height="9" fill="#ECE9D8"/><rect x="899" y="666" width="17" height="12" fill="#716F64"/><rect x="899" y="666" width="16" height="11" fill="#fff"/><rect x="900" y="667" width="15" height="10" fill="#ACA899"/><rect x="900" y="667" width="14" height="9" fill="#ECE9D8"/><path d="M910.5 672 L906.5 668 V676 Z" fill="#000"/><path d="M66 548H67V548H68V548H69V547H70V547H71V546H72V546H73V545H74V545H75V546H76V546H77V547H78V547H79V547H80V547H81V547H82V545H83V547H84V547H85V549H86V549H87V547H88V547H89V546H90V546H91V545H92V545H93V549H94V547H95V547H96V548H97V548H98V548H99V548H100V547H101V547H102V547H103V547H104V549H105V549H106V549H107V549H108V549H109V549H110V547H111V547H112V549H113V549H114V547H115V547H116V547H117V547H118V547H119V549H120V549H121V549H122V549H123V549H124V547H125V547H126V548H127V548H128V548H129V548H130V549H131V549H132V549H133V549H134V546H135V546H136V546H137V546H138V543H139V543H140V545H141V545H142V545H143V544H144M179 550H180V550H181V550H182V550H183V550H184V550H185V550H186V550H187V550H188V550H189V550H190V551H191V551H192V550H193V550H194V550H195V550H196V549H197V549H198V550H199V550H200V551H201V551H202V551H203V551H204V551H205V550H206V550H207V550H208V552H209V552H210V552H211V549H212V549H213V549H214V549H215V550H216V550H217V550H218V551H219V551H220V551H221V551H222V550H223V550H224V552H225V552H226V552H227V551H228V551H229V550H230V549H231V549H232V550H233V550H234V550H235V550H236V551H237V551H238V552H239V552H240V552H241V552H242V550H243V550H244V550H245V550H246V550H247V551H248V551H249V551H250V551H251V550H252V550H253V551H254V551H255V551H256V552H257V552H258V552H259V549H260V549H261V549H262V551H263V551H264V551H265V551H266V551H267V551H268V551H269V551H270V551H271V551H272V551H273V550H274V551H275V551H276V551H277V551H278V551H279V551H280V551H281V552H282V552H283V552H284V552H285V552H286V551H287V551H288V551H289V551H290V551H291V549H292V549H293V549H294V549H295V549H296V549H297V549H298V550H299V550H300V550H301V550H302V550H303V550H304V550H305V550H306V550H307V551H308V551H309V552H310V552H311V552H312V552H313V551H314V552H315V552H316V552H317V552H318V551H319V551H320V551H321V551H322V551H323V551H324V551H325V550H326V550H327V552H328V552H329V552H330V551H331V551H332V551H333V551H334V552H335V551H336V551H337V551H338V551H339V551H340V551H341V550H342V550H343V550H344V550H345V550H346V550H347V550H348V550H349V550H350V550H351V550H352V550H353V550H354V551H355V551H356V551H357V550H358V550H359V550H360V550H361V549H362V552H363V552H364V552H365V551H366V550H367V550H368V550H369V550H370V552H371V552H372V551H373V551H374V551H375V551H376V551H377V549H378V549H379V549H380V549H381V549H382V549H383V549H384V549H385V549H386V551H387V551H388V550H389V550H390V552H391V552H392V551H393V550H394V550H395V550H396V551H397V551H398V549H399V549H400V549H401V549H402V549H403V551H404V551H405V550H406V550H407V550H408V552H409V552H410V552H411V552H412V552H413V550H414V550H415V550H416V551H417V551H418V551H419V551H420V551H421V551H422V551H423V551H424V551H425V551H426V551H427V550H428V551H429V551H430V551H431V551H432V551H433V552H434V552H435V551H436V551H437V551H438V551H439V551H440V551H441V551H442V550H443V550H444V550H445V551H446V551H447V551H448V552H449V552H450V552H451V552H452V552H453V552H454V552H455V550H456V550H457V550H458V550H459V550H460V551H461V551H462V551H463V551H464V552H465V552H466V552H467V552H468V549H469V549H470V549H471V549H472V549H473V551H474V551H475V552H476V552H477V552H478V552H479V551H480V551H481V551H482V551H483V551H484V551H485V551H486V551H487V551H488V550H489V550H490V550H491V549H492V549H493V549H494V552H495V552H496V552H497V552H498V552H499V551H500V551H501V551H502V551H503V551H504V551H505V551H506V551H507V551H508V551H509V552H510V552H511V552H512V552H513V551H514V551H515V551H516V551H517V551H518V551H519V551H520V551H521V551H522V551H523V551H524V551H525V550H526V550H527V550H528V550H529V550H530V551H531V551H532V551H533V551H534V551H535V550H536V550H537V550H538V550H539V550H540V551H541V551H542V551H543V551H544V551H545V551H546V551H547V550H548V550H549V550H550V550H551V551H552V551H553V552H554V552H555V552H556V552H557V552H558V552H559V552H560V552H561V551H562V551H563V552H564V552H565V552H566V551H567V551H568V551H569V551H570V549H571V549H572V550H573V550H574V550H575V551H576V551H577V551H578V550H579V550H580V550H581V550H582V550H583V550H584V549H585V549H586V549H587V550H588V550H589V549H590V549H591V550H592V550H593V550H594V550H595V550H596V550H597V550H598V550H599V549H600V549H601V549H602V551H603V551H604V551H605V551H606V551H607V551H608V552H609V552H610V552H611V550H612V550H613V550H614V550H615V551H616V551H617V551H618V551H619V551H620V551H621V551H622V551H623V551H624V551H625V551H626V551H627V551H628V551H629V550H630V550H631V550H632V550H633V552H634V552H635V549H636V549H637V549H638V552H639V552H640V550H641V550H642V552H643V552H644V552H645V551H646V551H647V551H648V551H649V551H650V550H651V550H652V550H653V551H654V551H655V551H656V551H657V551H658V552H659V552H660V552H661V552H662V552H663V552H664V551H665V551H666V550H667V550H668V550H669V551H670V551H671V551H672V551H673V551H674V550H675V550H676V550H677V550H678V550H679V549H680V549H681V549H682V550H683V550H684V552H685V552H686V552H687V552H688V552H689V551H690V551H691V551H692V551H693V552H694V552H695V552H696V551H697V551H698V551H699V550H700V550H701V550H702V551H703V551H704V551H705V551H706V551H707V551H708V550H709V550H710V550H711V552H712V552H713V551H714V551H715V551H716V551H717V551H718V551H719V549H720V549H721V551H722V551H723V551H724V551H725V551H726V551H727V550H728V550H729V550H730V550H731V552H732V552H733V552H734V550H735V550H736V549H737V549H738V549H739V549H740V549H741V550H742V550H743V550H744V550H745V550H746V551H747V551H748V551H749V551H750V552H751V552H752V550H753V550H754V550H755V549H756V549H757V551H758V551H759V550H760V550H761V550H762V550H763V551H764V551H765V551H766V551H767V551H768V551H769V551H770V551H771V552H772V552H773V552H774V552H775V550H776V550H777V550H778V551H779V551H780V551H781V551H782V551H783V551H784V551H785V551H786V551H787V551H788V552H789V551H790V551H791V551H792V551H793V551H794V551H795V552H796V552H797V549H798V551H799V551H800V551H801V551H802V551H803V551H804V551H805V550H806V550H807V550H808V550H809V552H810V552H811V549H812V549H813V549H814V551H815V551H816V551H817V552H818V552H819V552H820V552H821V551H822V551H823V551H824V551H825V551H826V551H827V551H828V551H829V551H830V551H831V551H832V551H833V550H834V550H835V551H836V551H837V551H838V551H839V551H840V550H841V550H842V549H843V549H844V549H845V549H846V551H847V551H848V551H849V551H850V551H851V551H852V551H853V551H854V551H855V550H856V550H857V551H858V551H859V551H860V551H861V552H862V552H863V552H864V551H865V551H866V551H867V550H868V550H869V550H870V552H871V552H872V552H873V549H874V550H875V550H876V550H877V550H878V550H879V550H880V550H881V549H882V549H883V549H884V549H885V548H886V548H887V550H888V550H889V550H890V550H891V550H892V550H893V549H894V549H895V549H896V549H897V549H898V549H899V549H900V551H901V551H902V551H903V551H904V549H905V549H906V549H907V549H908V549H909V549H910V550H911V550H912V549H913V549H914V549H915V549H916" stroke="#0000FF" stroke-width="1.7" fill="none"/><g fill="#0000FF"><rect x="144" y="543" width="1" height="3"/><rect x="145" y="540" width="1" height="4"/><rect x="146" y="537" width="1" height="4"/><rect x="147" y="533" width="1" height="5"/><rect x="148" y="529" width="1" height="5"/><rect x="149" y="524" width="1" height="6"/><rect x="150" y="517" width="1" height="8"/><rect x="151" y="509" width="1" height="9"/><rect x="152" y="501" width="1" height="9"/><rect x="153" y="492" width="1" height="10"/><rect x="154" y="480" width="1" height="13"/><rect x="155" y="466" width="1" height="15"/><rect x="156" y="447" width="1" height="20"/><rect x="157" y="423" width="1" height="25"/><rect x="158" y="390" width="1" height="34"/><rect x="159" y="298" width="1" height="93"/><rect x="160" y="207" width="1" height="92"/><rect x="161" y="207" width="1" height="127"/><rect x="162" y="333" width="1" height="74"/><rect x="163" y="406" width="1" height="32"/><rect x="164" y="437" width="1" height="22"/><rect x="165" y="458" width="1" height="17"/><rect x="166" y="474" width="1" height="14"/><rect x="167" y="487" width="1" height="13"/><rect x="168" y="499" width="1" height="10"/><rect x="169" y="508" width="1" height="10"/><rect x="170" y="517" width="1" height="8"/><rect x="171" y="524" width="1" height="7"/><rect x="172" y="530" width="1" height="6"/><rect x="173" y="535" width="1" height="5"/><rect x="174" y="539" width="1" height="4"/><rect x="175" y="542" width="1" height="4"/><rect x="176" y="545" width="1" height="3"/><rect x="177" y="547" width="1" height="2"/><rect x="178" y="548" width="1" height="2"/></g><path d="M295.5 551V452.5H297.5V551" stroke="#0000FF" stroke-width="1" fill="none"/><path d="M376 462V552" stroke="#0000FF" stroke-width="2"/><path d="M432 501V552" stroke="#0000FF" stroke-width="2"/><path d="M476 486V553" stroke="#0000FF" stroke-width="2"/><path d="M512 535V553" stroke="#0000FF" stroke-width="2"/><path d="M542 518V552" stroke="#0000FF" stroke-width="2"/><path d="M567 544V552" stroke="#0000FF" stroke-width="2"/><path d="M591 529V550" stroke="#0000FF" stroke-width="2"/><path d="M612 543V551" stroke="#0000FF" stroke-width="2"/><path d="M630 523V551" stroke="#0000FF" stroke-width="2"/><path d="M663 534V553" stroke="#0000FF" stroke-width="2"/><path d="M691 539V552" stroke="#0000FF" stroke-width="2"/><path d="M794 537V552" stroke="#0000FF" stroke-width="2"/><path d="M802 521V552" stroke="#0000FF" stroke-width="2"/><path d="M809 538V551" stroke="#0000FF" stroke-width="2"/><path d="M848 543V552" stroke="#0000FF" stroke-width="2"/><path d="M854 531V552" stroke="#0000FF" stroke-width="2"/><path d="M860 544V552" stroke="#0000FF" stroke-width="2"/><path d="M872 541V553" stroke="#0000FF" stroke-width="2"/><text x="886" y="189" font-family="Liberation Serif" font-style="italic" font-weight="bold" font-size="22" fill="#808080">S</text><path d="M901 183.5 H910 M906 179 L904.5 188" stroke="#808080" stroke-width="1"/></svg>
<div class="t" style="left:322px;top:326px;font-size:24px;line-height:26.7px;color:#000;"><span style="letter-spacing:0.25px">ВК-sapr-корр.bgg - БТ</span><br>Рвых = 75W   Rн = 4 Ом<br>Кус = 12 dB</div>
<div style="left:319px;top:221px;width:219px;height:74px;background:#0A53E4;border-radius:3px 3px 0 0;"></div>
<div style="left:319px;top:221px;width:219px;height:22px;background:linear-gradient(to bottom,#2A74F6,#0A5BE8 40%,#0550E0 80%,#0040C8);border-radius:3px 3px 0 0;"></div>
<div class="t" style="left:323px;top:227px;font-weight:bold;font-size:11px;color:#fff;">THD</div>
<div style="left:323px;top:243px;width:211px;height:48px;background:#fff;border-top:1px solid #000;border-left:1px solid #000;box-sizing:border-box;"></div>
<div class="t" style="left:323px;top:251px;width:211px;text-align:center;font-size:37.5px;line-height:37.5px;color:#000;">0.002580 %</div>
<div style="left:519px;top:226px;width:11px;height:11px;border:1px solid #fff;border-radius:2px;background:linear-gradient(135deg,#F0A080,#E06040)"></div>
<svg style="position:absolute;left:521px;top:228px;" width="9" height="9" viewBox="0 0 9 9"><path d="M1 1 L8 8 M8 1 L1 8" stroke="#fff" stroke-width="1.8"/></svg>
<div style="left:674px;top:222px;width:204px;height:73px;background:#7A96DF;border-radius:3px 3px 0 0;"></div>
<div style="left:674px;top:222px;width:204px;height:22px;background:linear-gradient(to bottom,#A2B8EC,#7D9BE3 40%,#7797E0 80%,#6F8EDC);border-radius:3px 3px 0 0;"></div>
<div class="t" style="left:678px;top:228px;font-weight:bold;font-size:12px;color:#D8E2F6;">Peak Amplitude</div>
<div style="left:678px;top:244px;width:196px;height:47px;background:#fff;border-top:1px solid #000;border-left:1px solid #000;box-sizing:border-box;"></div>
<div class="t" style="left:678px;top:252px;width:196px;text-align:center;font-size:37.5px;line-height:37.5px;color:#000;">-4.51 dBV</div>
<div style="left:859px;top:227px;width:11px;height:11px;border:1px solid #fff;border-radius:2px;background:linear-gradient(135deg,#C8A0B8,#B080A0)"></div>
<svg style="position:absolute;left:861px;top:229px;" width="9" height="9" viewBox="0 0 9 9"><path d="M1 1 L8 8 M8 1 L1 8" stroke="#fff" stroke-width="1.8"/></svg>
<div class="t" style="left:944px;top:154px;font-size:12px;color:#000;"><u>Overlays</u></div>
<div class="t" style="left:919px;top:167px;width:24px;height:14px;font-size:12px;color:#000;transform:rotate(-90deg);transform-origin:center;">Set</div>
<div class="t" style="left:936px;top:168px;width:22px;height:14px;font-size:12px;color:#000;transform:rotate(-90deg);transform-origin:center;">On</div>
<div style="left:923px;top:189px;width:12px;height:12px;background:#ECE9D8;border:1px solid;border-color:#fff #716F64 #716F64 #fff;box-shadow:inset -1px -1px 0 #ACA899;"></div>
<div class="t" style="left:923px;top:189px;width:14px;text-align:center;font-size:12px;color:#000;">1</div>
<div style="left:940px;top:190px;width:9px;height:9px;background:#fff;border:2px solid;border-color:#ACA899 #fff #fff #ACA899;box-shadow:inset 1px 1px 0 #716F64;"></div>
<div class="t" style="left:956px;top:190px;font-size:12px;color:#008000;transform:scaleX(0.96);transform-origin:left;">Overlay 1</div>
<div style="left:923px;top:205px;width:12px;height:12px;background:#ECE9D8;border:1px solid;border-color:#fff #716F64 #716F64 #fff;box-shadow:inset -1px -1px 0 #ACA899;"></div>
<div class="t" style="left:923px;top:205px;width:14px;text-align:center;font-size:12px;color:#000;">2</div>
<div style="left:940px;top:206px;width:9px;height:9px;background:#fff;border:2px solid;border-color:#ACA899 #fff #fff #ACA899;box-shadow:inset 1px 1px 0 #716F64;"></div>
<div class="t" style="left:956px;top:206px;font-size:12px;color:#00A0A0;transform:scaleX(0.96);transform-origin:left;">Overlay 2</div>
<div style="left:923px;top:221px;width:12px;height:12px;background:#ECE9D8;border:1px solid;border-color:#fff #716F64 #716F64 #fff;box-shadow:inset -1px -1px 0 #ACA899;"></div>
<div class="t" style="left:923px;top:221px;width:14px;text-align:center;font-size:12px;color:#000;">3</div>
<div style="left:940px;top:222px;width:9px;height:9px;background:#fff;border:2px solid;border-color:#ACA899 #fff #fff #ACA899;box-shadow:inset 1px 1px 0 #716F64;"></div>
<div class="t" style="left:956px;top:222px;font-size:12px;color:#800080;transform:scaleX(0.96);transform-origin:left;">Overlay 3</div>
<div style="left:923px;top:237px;width:12px;height:12px;background:#ECE9D8;border:1px solid;border-color:#fff #716F64 #716F64 #fff;box-shadow:inset -1px -1px 0 #ACA899;"></div>
<div class="t" style="left:923px;top:237px;width:14px;text-align:center;font-size:12px;color:#000;">4</div>
<div style="left:940px;top:238px;width:9px;height:9px;background:#fff;border:2px solid;border-color:#ACA899 #fff #fff #ACA899;box-shadow:inset 1px 1px 0 #716F64;"></div>
<div class="t" style="left:956px;top:238px;font-size:12px;color:#FF00FF;transform:scaleX(0.96);transform-origin:left;">Overlay 4</div>
<div style="left:923px;top:253px;width:12px;height:12px;background:#ECE9D8;border:1px solid;border-color:#fff #716F64 #716F64 #fff;box-shadow:inset -1px -1px 0 #ACA899;"></div>
<div class="t" style="left:923px;top:253px;width:14px;text-align:center;font-size:12px;color:#000;">5</div>
<div style="left:940px;top:254px;width:9px;height:9px;background:#fff;border:2px solid;border-color:#ACA899 #fff #fff #ACA899;box-shadow:inset 1px 1px 0 #716F64;"></div>
<div class="t" style="left:956px;top:254px;font-size:12px;color:#804000;transform:scaleX(0.96);transform-origin:left;">Overlay 5</div>
<div style="left:923px;top:269px;width:12px;height:12px;background:#ECE9D8;border:1px solid;border-color:#fff #716F64 #716F64 #fff;box-shadow:inset -1px -1px 0 #ACA899;"></div>
<div class="t" style="left:923px;top:269px;width:14px;text-align:center;font-size:12px;color:#000;">6</div>
<div style="left:940px;top:270px;width:9px;height:9px;background:#fff;border:2px solid;border-color:#ACA899 #fff #fff #ACA899;box-shadow:inset 1px 1px 0 #716F64;"></div>
<div class="t" style="left:956px;top:270px;font-size:12px;color:#FF0000;transform:scaleX(0.96);transform-origin:left;">Overlay 6</div>
<div style="left:923px;top:285px;width:12px;height:12px;background:#ECE9D8;border:1px solid;border-color:#fff #716F64 #716F64 #fff;box-shadow:inset -1px -1px 0 #ACA899;"></div>
<div class="t" style="left:923px;top:285px;width:14px;text-align:center;font-size:12px;color:#000;">C</div>
<div style="left:940px;top:286px;width:9px;height:9px;background:#fff;border:2px solid;border-color:#ACA899 #fff #fff #ACA899;box-shadow:inset 1px 1px 0 #716F64;"></div>
<div class="t" style="left:956px;top:286px;font-size:12px;color:#000000;letter-spacing:0.35px;">Composite</div>
<div style="left:920px;top:302px;width:62px;height:16px;background:#ECE9D8;border:1px solid;border-color:#fff #716F64 #716F64 #fff;box-shadow:inset -1px -1px 0 #ACA899;"></div>
<div class="t" style="left:920px;top:303px;width:64px;text-align:center;font-size:12px;color:#000;">Options...</div>
<div style="left:932px;top:696px;width:10px;height:10px;background:#fff;border:1px solid #000;box-sizing:border-box"></div>
<div style="left:934px;top:698px;width:6px;height:6px;background:#ECE9D8"></div>
<div style="left:934px;top:700px;width:6px;height:1px;background:#000"></div>
<div style="left:1008px;top:696px;width:10px;height:10px;background:#fff;border:1px solid #000;box-sizing:border-box"></div>
<div style="left:1010px;top:698px;width:6px;height:6px;background:#ECE9D8"></div>
<div style="left:1010px;top:700px;width:6px;height:1px;background:#000"></div>
<div style="left:936px;top:698px;width:1px;height:6px;background:#000"></div>
<div style="left:1021px;top:116px;width:1px;height:594px;background:#fff"></div>
<div style="left:0px;top:709px;width:1024px;height:29px;background:#ECE9D8"></div>
<div style="left:0px;top:737px;width:1024px;height:1px;background:#fff"></div>
<div style="left:0px;top:709px;width:1024px;height:2px;background:#fff"></div>
<div style="left:5px;top:713px;width:117px;height:16px;border:1px solid;border-color:#A8A596 #F4F3EE #F4F3EE #A8A596;"></div>
<div class="t" style="left:9px;top:715px;font-size:12px;color:#000;">Stopped</div>
<div style="left:125px;top:713px;width:100px;height:16px;border:1px solid;border-color:#A8A596 #F4F3EE #F4F3EE #A8A596;"></div>
<div class="t" style="left:129px;top:715px;font-size:12px;color:#000;">Real Time</div>
<div style="left:228px;top:713px;width:69px;height:16px;border:1px solid;border-color:#A8A596 #F4F3EE #F4F3EE #A8A596;"></div>
<div class="t" style="left:232px;top:715px;font-size:12px;color:#000;">96000 Hz</div>
<div style="left:300px;top:713px;width:51px;height:16px;border:1px solid;border-color:#A8A596 #F4F3EE #F4F3EE #A8A596;"></div>
<div class="t" style="left:304px;top:715px;font-size:12px;color:#000;">24 Bit</div>
<div style="left:354px;top:713px;width:49px;height:16px;border:1px solid;border-color:#A8A596 #F4F3EE #F4F3EE #A8A596;"></div>
<div class="t" style="left:358px;top:715px;font-size:12px;color:#000;">Stereo</div>
<div style="left:406px;top:713px;width:101px;height:16px;border:1px solid;border-color:#A8A596 #F4F3EE #F4F3EE #A8A596;"></div>
<div class="t" style="left:410px;top:715px;font-size:12px;color:#000;">FFT 131072 pts</div>
<div style="left:510px;top:713px;width:73px;height:16px;border:1px solid;border-color:#A8A596 #F4F3EE #F4F3EE #A8A596;"></div>
<div class="t" style="left:514px;top:715px;font-size:12px;color:#000;">Hanning</div>
<div style="left:586px;top:713px;width:433px;height:16px;border:1px solid;border-color:#A8A596 #F4F3EE #F4F3EE #A8A596;"></div>
<div style="left:0;top:738px;width:1024px;height:30px;background:linear-gradient(to bottom,#1E4EC2 0px,#1E4EC2 1px,#3A8AE8 1.5px,#3D8CEA 3px,#2A6ADE 4.5px,#2156D6 5.5px,#2259D8 20px,#2460DE 28px,#1C46B0 30px);"></div>
<div style="left:0;top:738px;width:96px;height:30px;border-radius:0 15px 15px 0 / 0 16px 16px 0;background:linear-gradient(to bottom,#6AAA6A 0px,#5BA65B 2px,#3C963C 6px,#3A9C3A 12px,#44AA44 20px,#3A9A3A 26px,#2F7F2F 30px);box-shadow:inset -2px 0 2px rgba(20,80,20,0.55);"></div>
<svg style="position:absolute;left:9px;top:743px;" width="22" height="20" viewBox="0 0 22 20"><path d="M3.5 3.5 Q6.5 1.5 10.5 3 L9.5 9 Q6 7.5 2.5 9.5 Z" fill="#F0602A"/><path d="M11.5 3.5 Q15 5 19.5 3.5 L18.5 9.5 Q14.5 11 10.5 9.5 Z" fill="#80C83A"/><path d="M2.2 10.5 Q6 8.5 9.3 10 L8.3 16 Q4.5 14.5 1.2 16.5 Z" fill="#3A80F0"/><path d="M10.3 10.5 Q14.5 12 18.3 10.5 L17.3 16.5 Q13 18 9.3 16.5 Z" fill="#F8C82A"/></svg>
<div class="t" style="left:34px;top:745px;font-style:italic;font-weight:bold;font-size:19px;line-height:19px;color:#fff;text-shadow:1px 1px 1px #1a4a1a;transform:scaleX(0.9);transform-origin:left;">пуск</div>
<div style="left:105px;top:742px;width:160px;height:23px;border-radius:3px;background:#1E4EBE;box-shadow:inset 1px 1px 1px #0F2E80, inset -1px -1px 0 #3A70D8;"></div>
<svg style="position:absolute;left:116px;top:746px;" width="16" height="16" viewBox="0 0 16 16"><rect x="0.5" y="0.5" width="15" height="15" fill="#fff" stroke="#2A2A2A"/><line x1="3.5" y1="1" x2="3.5" y2="15" stroke="#C8C8C8"/><line x1="1" y1="3.5" x2="15" y2="3.5" stroke="#C8C8C8"/><line x1="6.5" y1="1" x2="6.5" y2="15" stroke="#C8C8C8"/><line x1="1" y1="6.5" x2="15" y2="6.5" stroke="#C8C8C8"/><line x1="9.5" y1="1" x2="9.5" y2="15" stroke="#C8C8C8"/><line x1="1" y1="9.5" x2="15" y2="9.5" stroke="#C8C8C8"/><line x1="12.5" y1="1" x2="12.5" y2="15" stroke="#C8C8C8"/><line x1="1" y1="12.5" x2="15" y2="12.5" stroke="#C8C8C8"/><polyline points="1,2.5 5.5,1.5 7,3 8,4.5 11,2.5 13,4.5 15,7" fill="none" stroke="#F03838" stroke-width="1.2"/><polyline points="1,3.5 4,3.5 5.5,2 5.5,5.5 7.5,6 9.5,6.5 10.5,4.5 12,6.5 13.5,8.5 15,11" fill="none" stroke="#0000F0" stroke-width="1.4"/><text x="3" y="14" font-family="Liberation Serif" font-style="italic" font-weight="bold" font-size="8" textLength="10.5" lengthAdjust="spacingAndGlyphs" fill="#000">SC</text></svg>
<div class="t" style="left:135px;top:747px;font-size:11px;color:#fff;transform:scaleX(0.94);transform-origin:left;">SpectraPLUS-SC Sou...</div>
<div style="left:266px;top:742px;width:158px;height:23px;border-radius:3px;background:linear-gradient(to bottom,#4C90F8,#3C82F2 4px,#3A7EF0);box-shadow:inset 1px 1px 0 #68A4FA, inset -1px -1px 0 #2A5FCC;"></div>
<svg style="position:absolute;left:276px;top:745px;" width="13" height="16" viewBox="0 0 13 16"><path d="M2 6 L11 6 L10 15 L3 15 Z" fill="#E8D098" stroke="#8A6030"/><path d="M4 1 L5 9 M7 0.5 L7 9 M10 1 L9 9" stroke="#D03020" stroke-width="1.4"/><path d="M5.5 2 L6 9" stroke="#30A030" stroke-width="1.2"/><path d="M8.5 2 L8 9" stroke="#3060E0" stroke-width="1.2"/></svg>
<div class="t" style="left:295px;top:747px;font-size:11px;color:#fff;transform:scaleX(0.965);transform-origin:left;">Безымянный - Paint</div>
<div style="left:838px;top:745px;width:16px;height:16px;background:#3A6CD2"></div>
<div class="t" style="left:839px;top:746px;font-size:11px;color:#fff;transform:scaleX(0.9);transform-origin:left;">RU</div>
<svg style="position:absolute;left:860px;top:746px;" width="17" height="14" viewBox="0 0 17 14"><rect x="0.5" y="4.5" width="16" height="9" fill="#fff" stroke="#000"/><rect x="2" y="6" width="1" height="1" fill="#000"/><rect x="2" y="8" width="1" height="1" fill="#000"/><rect x="2" y="10" width="1" height="1" fill="#000"/><rect x="4" y="6" width="1" height="1" fill="#000"/><rect x="4" y="8" width="1" height="1" fill="#000"/><rect x="4" y="10" width="1" height="1" fill="#000"/><rect x="6" y="6" width="1" height="1" fill="#000"/><rect x="6" y="8" width="1" height="1" fill="#000"/><rect x="6" y="10" width="1" height="1" fill="#000"/><rect x="8" y="6" width="1" height="1" fill="#000"/><rect x="8" y="8" width="1" height="1" fill="#000"/><rect x="8" y="10" width="1" height="1" fill="#000"/><rect x="10" y="6" width="1" height="1" fill="#000"/><rect x="10" y="8" width="1" height="1" fill="#000"/><rect x="10" y="10" width="1" height="1" fill="#000"/><rect x="12" y="6" width="1" height="1" fill="#000"/><rect x="12" y="8" width="1" height="1" fill="#000"/><rect x="12" y="10" width="1" height="1" fill="#000"/><rect x="14" y="6" width="1" height="1" fill="#000"/><rect x="14" y="8" width="1" height="1" fill="#000"/><rect x="14" y="10" width="1" height="1" fill="#000"/><path d="M4 4 L6 1 L10 2 L12 0" fill="none" stroke="#000"/></svg>
<div style="left:895px;top:738px;width:129px;height:30px;background:linear-gradient(to bottom,#0C59B9 0px,#1AA2F0 2px,#1498E8 6px,#1290E4 25px,#0D78D0 31px);border-left:1px solid #0A3A90;box-sizing:border-box;"></div>
<svg style="position:absolute;left:906px;top:745px;" width="18" height="17" viewBox="0 0 18 17"><rect x="1" y="2" width="8" height="7" fill="#6E86B8" stroke="#2A3A6A"/><rect x="6" y="5" width="8" height="7" fill="#8AA0D0" stroke="#2A3A6A"/><path d="M9 10 L16 16 M16 10 L9 16" stroke="#E02020" stroke-width="2.4"/></svg>
<svg style="position:absolute;left:924px;top:745px;" width="17" height="17" viewBox="0 0 17 17"><circle cx="7" cy="8" r="6" fill="#B8B8B8" stroke="#505050"/><circle cx="7" cy="8" r="3" fill="#707070"/><path d="M9 14 L15 11" stroke="#8AA0E0"/></svg>
<svg style="position:absolute;left:942px;top:744px;" width="16" height="17" viewBox="0 0 16 17"><rect x="3" y="8" width="11" height="7" fill="#C8C8B8" stroke="#404040" transform="rotate(-20 8 11)"/><path d="M5 2 L9 7 L12 3" fill="none" stroke="#30B030" stroke-width="2"/></svg>
<svg style="position:absolute;left:960px;top:744px;" width="17" height="17" viewBox="0 0 17 17"><circle cx="8.5" cy="8.5" r="8" fill="#3CB83C"/><circle cx="8.5" cy="9" r="5.5" fill="#5A3ACC"/><circle cx="6" cy="6" r="2" fill="#B0A0FF"/></svg>
<div class="t" style="left:984px;top:747px;font-size:11px;color:#fff;">13:51</div></body></html>
